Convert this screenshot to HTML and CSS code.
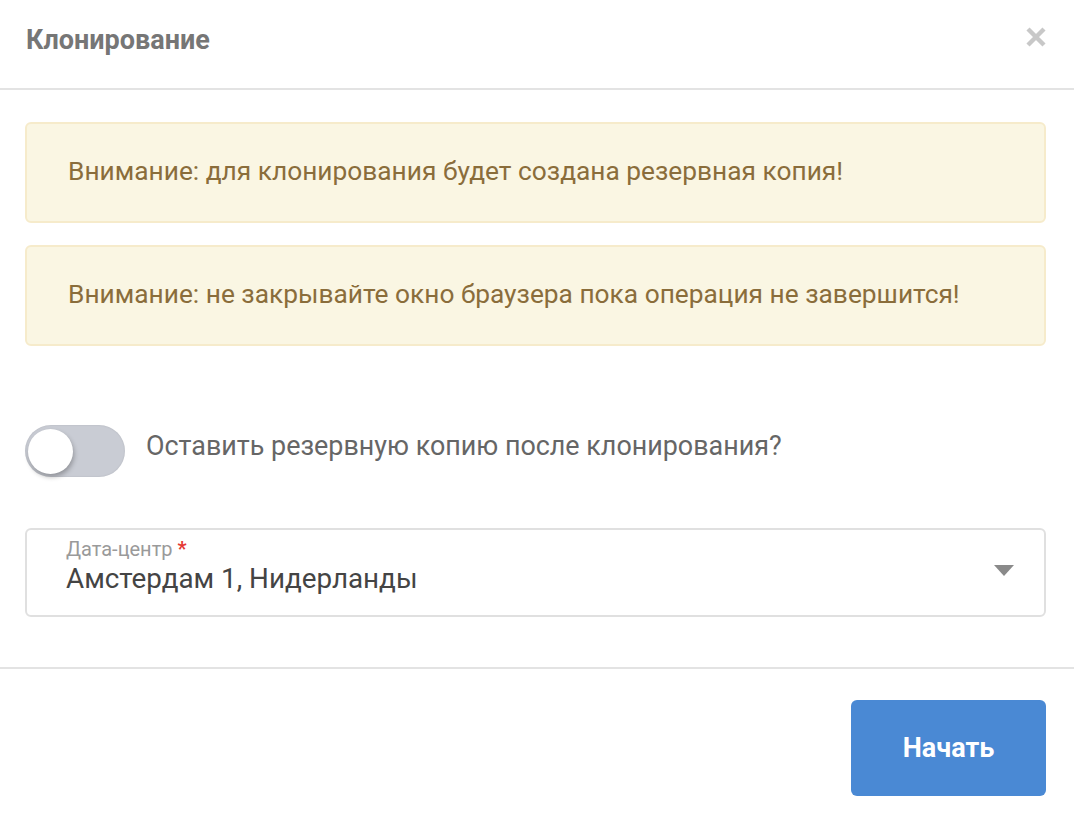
FILE: index.html
```html
<!DOCTYPE html>
<html lang="ru">
<head>
<meta charset="utf-8">
<title>Клонирование</title>
<link rel="stylesheet" href="styles.css">
</head>
<body>
<div class="modal">
  <header class="modal-header">
    <h2 class="modal-title">Клонирование</h2>
    <button class="close" aria-label="Закрыть">
      <svg width="20" height="20" viewBox="0 0 20 20"><path d="M2 2 L18 18 M18 2 L2 18" stroke="#c8c8c8" stroke-width="4.4" stroke-linecap="butt"/></svg>
    </button>
  </header>
  <div class="modal-body">
    <div class="alert">Внимание: для клонирования будет создана резервная копия!</div>
    <div class="alert">Внимание: не закрывайте окно браузера пока операция не завершится!</div>
    <label class="switch-row">
      <span class="switch"><span class="knob"></span></span>
      <span class="switch-label">Оставить резервную копию после клонирования?</span>
    </label>
    <div class="select">
      <div class="select-text">
        <span class="select-label">Дата-центр <span class="req">*</span></span>
        <span class="select-value">Амстердам 1, Нидерланды</span>
      </div>
      <svg class="caret" width="20" height="11" viewBox="0 0 20 11"><path d="M0 0 H20 L10 11 Z" fill="#8a8a8a"/></svg>
    </div>
  </div>
  <footer class="modal-footer">
    <button class="btn-primary">Начать</button>
  </footer>
</div>
</body>
</html>
```
FILE: styles.css
```css
* { box-sizing: border-box; }
html, body { margin: 0; padding: 0; background: #fff; }
body { font-family: Roboto, "Noto Sans", sans-serif; }

.modal { width: 1074px; height: 814px; display: flex; flex-direction: column; }

.modal-header {
  height: 90px;
  border-bottom: 2px solid #e3e3e3;
  display: flex;
  align-items: center;
  justify-content: space-between;
  padding: 0 28px 0 26px;
}
.modal-title {
  margin: 0;
  font-size: 27px;
  line-height: 32px;
  font-weight: 700;
  color: #767676;
  padding-bottom: 8px;
}
.close {
  border: 0; background: none; padding: 0; margin: 0;
  width: 20px; height: 20px; display: block; margin-bottom: 14px;
}
.close svg { display: block; }

.modal-body {
  padding: 32px 28px 50px 25px;
  display: flex;
  flex-direction: column;
}
.alert {
  height: 101px;
  background: #faf6e3;
  border: 2px solid #f6ebcb;
  border-radius: 6px;
  padding: 0 41px 4px;
  display: flex;
  align-items: center;
  font-size: 26.3px;
  font-weight: 400;
  color: #8a6d3b;
  margin-bottom: 22px;
}
.alert + .alert { margin-bottom: 0; }

.switch-row {
  display: flex;
  align-items: center;
  gap: 21px;
  margin-top: 79px;
}
.switch {
  width: 100px; height: 52px;
  border-radius: 26px;
  background: #c9ccd4;
  position: relative;
  flex: none;
  box-shadow: inset 0 0 2px rgba(0,0,0,0.12);
}
.knob {
  position: absolute;
  left: 3px; top: 4px;
  width: 45px; height: 45px;
  border-radius: 50%;
  background: #fff;
  box-shadow: 1px 3px 5px rgba(0,0,0,0.28);
}
.switch-label {
  font-size: 26.9px;
  color: #666;
  padding-bottom: 10px;
}

.select {
  margin-top: 51px;
  height: 89px;
  border: 2px solid #e0e0e0;
  border-radius: 6px;
  display: flex;
  align-items: center;
  justify-content: space-between;
  padding: 0 30px 0 39px;
}
.select-text { display: flex; flex-direction: column; padding-bottom: 12px; }
.select-label {
  font-size: 20px;
  color: #9a9a9a;
  line-height: 22px;
}
.req { color: #e53935; font-weight: 700; }
.select-value {
  font-size: 27.8px;
  color: #444;
  line-height: 34px;
  margin-top: 2px;
}
.caret { display: block; margin-bottom: 4px; }

.modal-footer {
  border-top: 2px solid #e3e3e3;
  display: flex;
  justify-content: flex-end;
  padding: 31px 28px 0 0;
}
.btn-primary {
  width: 195px; height: 96px;
  background: #4a89d4;
  color: #fff;
  border: 0;
  border-radius: 6px;
  font-family: Roboto, "Noto Sans", sans-serif;
  font-size: 27px;
  font-weight: 700;
  padding-bottom: 2px;
}
```
